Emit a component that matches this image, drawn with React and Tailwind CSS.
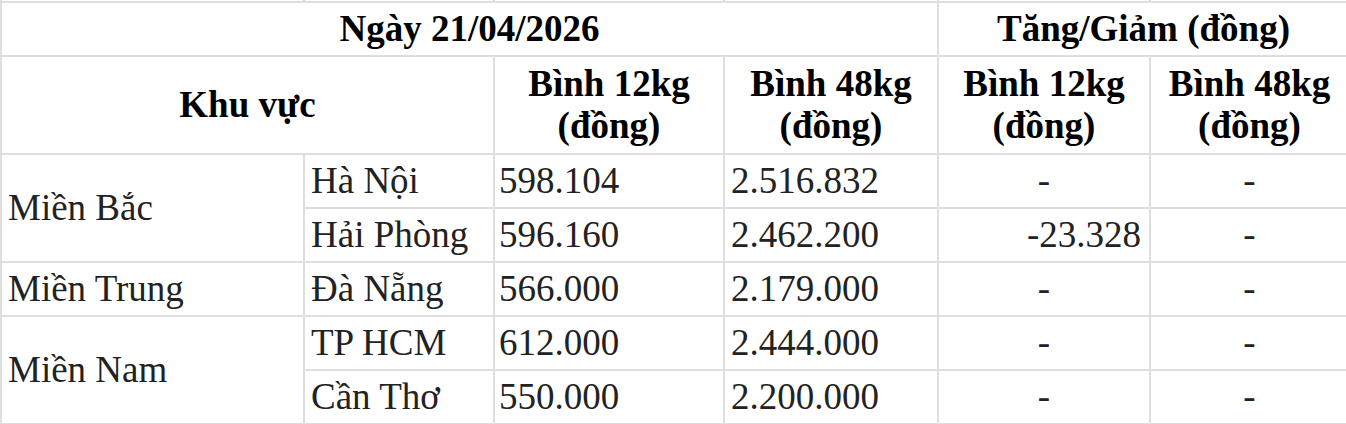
const rows = [
  { region: 'Miền Bắc', span: 2, city: 'Hà Nội', p12: '598.104', p48: '2.516.832', d12: '-', d48: '-' },
  { city: 'Hải Phòng', p12: '596.160', p48: '2.462.200', d12: '-23.328', d48: '-' },
  { region: 'Miền Trung', span: 1, city: 'Đà Nẵng', p12: '566.000', p48: '2.179.000', d12: '-', d48: '-' },
  { region: 'Miền Nam', span: 2, city: 'TP HCM', p12: '612.000', p48: '2.444.000', d12: '-', d48: '-' },
  { city: 'Cần Thơ', p12: '550.000', p48: '2.200.000', d12: '-', d48: '-' }
]

const cell = 'border-2 border-[#dedede] p-0 align-middle'

function DeltaCell({ value }) {
  // số âm canh phải, dấu gạch canh giữa
  const isNum = value !== '-'
  return (
    <td className={`${cell} h-[54px] ${isNum ? 'text-right pr-2' : 'text-center'}`}>
      {value}
    </td>
  )
}

export default function App() {
  return (
    <div className="w-[1346px] h-[424px] overflow-hidden bg-white">
      <table
        className="table-fixed border-collapse w-[1348px] text-[37px] leading-[42px] text-[#222]"
        style={{ fontFamily: '"Liberation Serif", "Times New Roman", serif' }}
      >
        <colgroup>
          <col className="w-[303px]" />
          <col className="w-[190px]" />
          <col className="w-[230px]" />
          <col className="w-[214px]" />
          <col className="w-[212px]" />
          <col className="w-[199px]" />
        </colgroup>
        <tbody>
          <tr>
            {[0, 1, 2, 3, 4, 5].map((i) => (
              <td key={i} className="border-2 border-t-0 border-[#dedede] p-0 h-[2px]" />
            ))}
          </tr>
          <tr className="font-bold text-black">
            <td colSpan={4} className={`${cell} h-[54px] text-center`}>
              Ngày 21/04/2026
            </td>
            <td colSpan={2} className={`${cell} h-[54px] text-center`}>
              Tăng/Giảm (đồng)
            </td>
          </tr>
          <tr className="font-bold text-black">
            <td colSpan={2} className={`${cell} h-[98px] text-center`}>
              Khu vực
            </td>
            <td className={`${cell} text-center`}>
              Bình 12kg
              <br />
              (đồng)
            </td>
            <td className={`${cell} text-center`}>
              Bình 48kg
              <br />
              (đồng)
            </td>
            <td className={`${cell} text-center`}>
              Bình 12kg
              <br />
              (đồng)
            </td>
            <td className={`${cell} text-center`}>
              Bình 48kg
              <br />
              (đồng)
            </td>
          </tr>
          {rows.map((r, i) => (
            <tr key={i}>
              {r.region && (
                <td rowSpan={r.span} className={`${cell} pl-1.5`}>
                  {r.region}
                </td>
              )}
              <td className={`${cell} h-[54px] pl-1.5`}>{r.city}</td>
              <td className={`${cell} pl-1`}>{r.p12}</td>
              <td className={`${cell} pl-1.5`}>{r.p48}</td>
              <DeltaCell value={r.d12} />
              <DeltaCell value={r.d48} />
            </tr>
          ))}
        </tbody>
      </table>
    </div>
  )
}
